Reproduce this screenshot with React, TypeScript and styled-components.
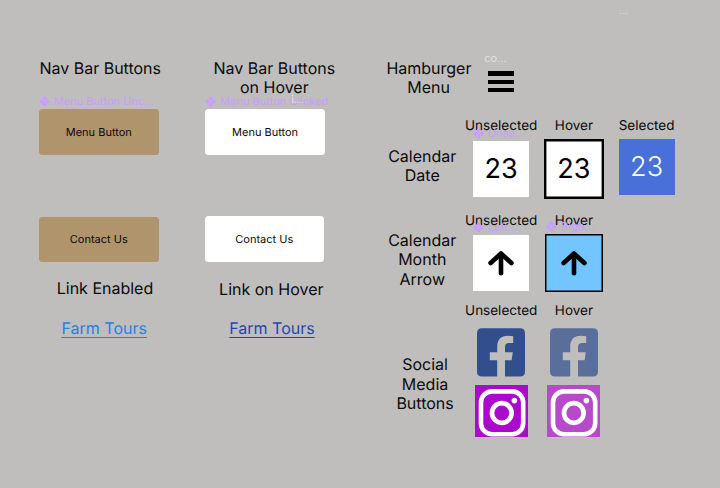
import React from "react";
import styled, { createGlobalStyle } from "styled-components";

const GlobalStyle = createGlobalStyle`
  html, body { margin: 0; padding: 0; background: #bfbebc; }
  body { overflow: hidden; }
  * { box-sizing: border-box; }
`;

const Board = styled.main`
  width: 720px;
  height: 488px;
  display: flex;
  background: #bfbebc;
  color: #0b0b0b;
  font-family: Inter, "Liberation Sans", sans-serif;
  text-rendering: geometricPrecision;
  overflow: hidden;
  position: relative;
`;

const Column = styled.section<{ $width: number; $left?: number }>`
  flex: none;
  width: ${(p) => p.$width}px;
  margin-left: ${(p) => p.$left ?? 0}px;
  padding-top: 58.8px;
  display: flex;
  flex-direction: column;
`;

const HeadingBox = styled.div<{ $height: number; $top?: number; $shift?: number }>`
  height: ${(p) => p.$height}px;
  padding-top: ${(p) => p.$top ?? 0}px;
  margin-left: ${(p) => p.$shift ?? 0}px;
  width: 140px;
`;

const Heading = styled.h2`
  margin: 0;
  font-size: 16px;
  font-weight: 400;
  line-height: 19.4px;
  text-align: center;
  white-space: pre-line;
`;

const ButtonSlot = styled.div<{ $height: number; $shift?: number }>`
  position: relative;
  height: ${(p) => p.$height}px;
  margin-left: ${(p) => p.$shift ?? 0}px;
`;

const NavButton = styled.button<{ $hover?: boolean }>`
  display: flex;
  align-items: center;
  justify-content: center;
  width: 119.6px;
  height: 45.4px;
  padding: 0;
  border: 0;
  border-radius: 3.5px;
  background: ${(p) => (p.$hover ? "#ffffff" : "#b0946c")};
  color: #0b0b0b;
  font: 400 11px Inter, sans-serif;
  text-rendering: geometricPrecision;
`;

const FarmLink = styled.a<{ $hover?: boolean }>`
  display: block;
  width: max-content;
  margin: 0 auto;
  font-size: 16px;
  line-height: 19.4px;
  color: ${(p) => (p.$hover ? "#2447b8" : "#2482e6")};
  text-decoration: underline;
  text-decoration-thickness: 1.4px;
  text-underline-offset: 2.6px;
`;

const Tag = styled.span<{ $top?: number; $left?: number; $pale?: boolean }>`
  position: absolute;
  z-index: 1;
  top: ${(p) => p.$top ?? -15}px;
  left: ${(p) => p.$left ?? 0}px;
  display: flex;
  align-items: center;
  gap: 3.7px;
  font-size: 11px;
  line-height: 14px;
  letter-spacing: 0.03px;
  white-space: nowrap;
  color: ${(p) => (p.$pale ? "#e2e1e0" : "#c99cff")};
`;

const Row = styled.div<{ $height: number }>`
  display: flex;
  height: ${(p) => p.$height}px;
`;

const RowLabel = styled.div<{ $top: number; $shift?: number }>`
  flex: none;
  width: 84.5px;
  padding-top: ${(p) => p.$top}px;
  margin-left: ${(p) => p.$shift ?? 0}px;
  margin-right: ${(p) => 0.4 - (p.$shift ?? 0)}px;
`;

const State = styled.div`
  flex: none;
  width: 72.7px;
  display: flex;
  flex-direction: column;
  align-items: center;
`;

const Caption = styled.div`
  height: 17px;
  font-size: 13.5px;
  line-height: 18.8px;
  white-space: nowrap;
`;

const Tile = styled.div<{ $size: number; $gap: number; $bg: string; $border?: number; $fg?: string }>`
  position: relative;
  flex: none;
  width: ${(p) => p.$size}px;
  height: ${(p) => p.$size}px;
  margin-top: ${(p) => p.$gap}px;
  display: flex;
  align-items: center;
  justify-content: center;
  background: ${(p) => p.$bg};
  color: ${(p) => p.$fg ?? "#000"};
  box-shadow: inset 0 0 0 ${(p) => p.$border ?? 0}px #000;
  font-size: 27px;
  font-weight: ${(p) => (p.$fg ? 350 : 400)};
  letter-spacing: 0.2px;
  line-height: 34px;
`;

const Burger = styled.div`
  position: relative;
  width: 26px;
  height: 21px;
  margin-top: 12.6px;
  display: flex;
  flex-direction: column;
  justify-content: space-between;
`;

const Bar = styled.span`
  height: 4.2px;
  background: #000;
`;

const Social = styled.div<{ $gap: number }>`
  margin-top: ${(p) => p.$gap}px;
  svg { display: block; }
`;

const ComponentMark = () => (
  <svg width="11" height="11" viewBox="0 0 11 11" fill="currentColor">
    <path d="M5.5 0 8 2.5 5.5 5 3 2.5zM5.5 6 8 8.5 5.5 11 3 8.5zM2.5 3 5 5.5 2.5 8 0 5.5zM8.5 3 11 5.5 8.5 8 6 5.5z" />
  </svg>
);

const UpArrow = () => (
  <svg width="28" height="28" viewBox="0 0 28 28" fill="none" stroke="#000" strokeWidth="4.6" strokeLinecap="round">
    <path d="M14 24.2V5" />
    <path d="M3.6 14 14 4.5 24.4 14" strokeLinejoin="round" />
  </svg>
);

const Facebook = ({ color }: { color: string }) => (
  <svg width="48" height="49" viewBox="0 0 48 49">
    <path
      fill={color}
      d="M5 .3H43Q48 .3 48 5.3V43.5Q48 48.5 43 48.5H28V32.2H34.6L35.8 24.3H28V19.2C28 16.2 29.2 14.9 32.3 14.9H36.2V8.3Q33.6 7.8 31 7.8C24 7.8 20.2 11.8 20.2 18.6V24.3H12.8V32.2H20.2V48.5H5Q0 48.5 0 43.5V5.3Q0 .3 5 .3Z"
    />
  </svg>
);

const Instagram = ({ bg }: { bg: string }) => (
  <svg width="53" height="52" viewBox="0 0 53 52">
    <path fill={bg} d="M0 0H53V52H0z" />
    <g fill="none" stroke="#fff">
      <rect x="6" y="6.4" width="42.2" height="42.8" rx="11" strokeWidth="4.6" />
      <circle cx="26.8" cy="28" r="9.8" strokeWidth="4.7" />
    </g>
    <circle cx="39.4" cy="15.6" r="2.8" fill="#fff" />
  </svg>
);

export default function App() {
  return (
    <Board>
      <GlobalStyle />
      <Column $left={39} $width={166}>
        <HeadingBox $height={50.4} $shift={-8.8}>
          <Heading>Nav Bar Buttons</Heading>
        </HeadingBox>
        <ButtonSlot $height={107.5}>
          <Tag><ComponentMark />Menu Button Unc...</Tag>
          <NavButton>Menu Button</NavButton>
        </ButtonSlot>
        <ButtonSlot $height={61.5}>
          <NavButton>Contact Us</NavButton>
        </ButtonSlot>
        <HeadingBox $height={40.5} $top={0.6} $shift={-4}>
          <Heading>Link Enabled</Heading>
        </HeadingBox>
        <HeadingBox $height={30} $top={0.3} $shift={-4.8}>
          <FarmLink>Farm Tours</FarmLink>
        </HeadingBox>
      </Column>

      <Column $width={175}>
        <HeadingBox $height={50.4} $shift={-0.7}>
          <Heading>{"Nav Bar Buttons\non Hover"}</Heading>
        </HeadingBox>
        <ButtonSlot $height={107.2} $shift={0.3}>
          <Tag><ComponentMark />Menu Button Clicked</Tag>
          <Tag $pale $left={86} $top={-17}>i...</Tag>
          <NavButton $hover>Menu Button</NavButton>
        </ButtonSlot>
        <ButtonSlot $height={61.8} $shift={-0.5}>
          <NavButton $hover>Contact Us</NavButton>
        </ButtonSlot>
        <HeadingBox $height={40.5} $top={1.5} $shift={-3.7}>
          <Heading>Link on Hover</Heading>
        </HeadingBox>
        <HeadingBox $height={30} $top={0.3} $shift={-3}>
          <FarmLink $hover>Farm Tours</FarmLink>
        </HeadingBox>
      </Column>

      <Column $width={340}>
        <Row $height={58}>
          <RowLabel $top={0} $shift={6.4}>
            <Heading>{"Hamburger\nMenu"}</Heading>
          </RowLabel>
          <State>
            <Burger>
              <Tag $pale $left={-4} $top={-20}>co...</Tag>
              <Bar /><Bar /><Bar />
            </Burger>
          </State>
        </Row>
        <Row $height={95}>
          <RowLabel $top={30}>
            <Heading>{"Calendar\nDate"}</Heading>
          </RowLabel>
          <State>
            <Caption>Unselected</Caption>
            <Tile $size={56} $gap={7.3} $bg="#fff">
              <Tag><ComponentMark />Unse...</Tag>23
            </Tile>
          </State>
          <State>
            <Caption>Hover</Caption>
            <Tile $size={60} $gap={5.3} $bg="#fff" $border={2.4}>23</Tile>
          </State>
          <State>
            <Caption>Selected</Caption>
            <Tile $size={56} $gap={5.3} $bg="#496fd8" $fg="#fff">23</Tile>
          </State>
        </Row>
        <Row $height={90.5}>
          <RowLabel $top={19}>
            <Heading>{"Calendar\nMonth\nArrow"}</Heading>
          </RowLabel>
          <State>
            <Caption>Unselected</Caption>
            <Tile $size={56} $gap={6.3} $bg="#fff">
              <Tag><ComponentMark />Left ...</Tag><UpArrow />
            </Tile>
          </State>
          <State>
            <Caption>Hover</Caption>
            <Tile $size={58} $gap={5.3} $bg="#73c5ff" $border={1.5}>
              <Tag $left={1.5}><ComponentMark />Righ...</Tag><UpArrow />
            </Tile>
          </State>
        </Row>
        <Row $height={150}>
          <RowLabel $top={53} $shift={2.8}>
            <Heading>{"Social\nMedia\nButtons"}</Heading>
          </RowLabel>
          <State>
            <Caption>Unselected</Caption>
            <Social $gap={8.7}><Facebook color="#324e8d" /></Social>
            <Social $gap={8}><Instagram bg="#ab09cc" /></Social>
          </State>
          <State>
            <Caption>Hover</Caption>
            <Social $gap={8.7}><Facebook color="#5a6e9b" /></Social>
            <Social $gap={8}><Instagram bg="#b64acb" /></Social>
          </State>
        </Row>
      </Column>
      <Tag $pale $left={619} $top={3}>...</Tag>
    </Board>
  );
}
